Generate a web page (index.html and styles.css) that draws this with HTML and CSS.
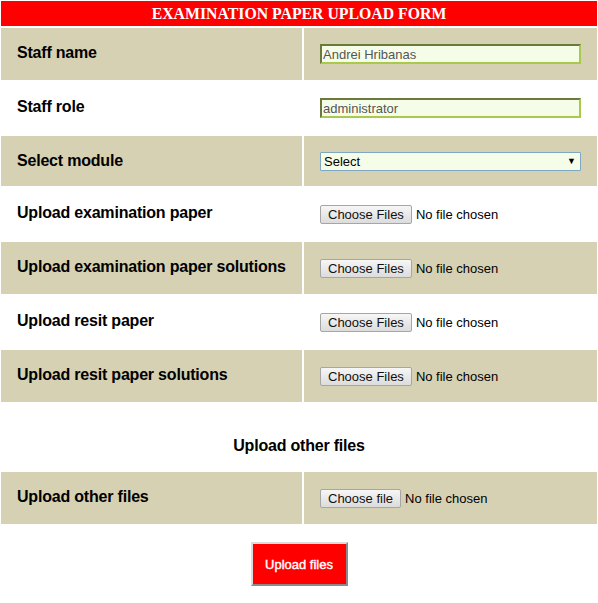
FILE: index.html
```html
<!DOCTYPE html>
<html>
<head>
<meta charset="utf-8">
<title>Examination paper upload form</title>
<link rel="stylesheet" href="styles.css">
</head>
<body>
<form class="form">
  <div class="title">EXAMINATION PAPER UPLOAD FORM</div>

  <div class="row tan">
    <div class="label">Staff name</div>
    <div class="field"><input class="text" type="text" value="Andrei Hribanas"></div>
  </div>
  <div class="row">
    <div class="label">Staff role</div>
    <div class="field"><input class="text" type="text" value="administrator"></div>
  </div>
  <div class="row tan short">
    <div class="label">Select module</div>
    <div class="field">
      <div class="select-wrap">
        <select class="select"><option>Select</option></select>
        <span class="arrow">▼</span>
      </div>
    </div>
  </div>
  <div class="row">
    <div class="label">Upload examination paper</div>
    <div class="field"><label class="file"><input type="file" multiple><span class="file-btn">Choose Files</span><span class="file-txt">No file chosen</span></label></div>
  </div>
  <div class="row tan">
    <div class="label">Upload examination paper solutions</div>
    <div class="field"><label class="file"><input type="file" multiple><span class="file-btn">Choose Files</span><span class="file-txt">No file chosen</span></label></div>
  </div>
  <div class="row">
    <div class="label">Upload resit paper</div>
    <div class="field"><label class="file"><input type="file" multiple><span class="file-btn">Choose Files</span><span class="file-txt">No file chosen</span></label></div>
  </div>
  <div class="row tan">
    <div class="label">Upload resit paper solutions</div>
    <div class="field"><label class="file"><input type="file" multiple><span class="file-btn">Choose Files</span><span class="file-txt">No file chosen</span></label></div>
  </div>

  <div class="section">Upload other files</div>

  <div class="row tan">
    <div class="label">Upload other files</div>
    <div class="field"><label class="file"><input type="file"><span class="file-btn">Choose file</span><span class="file-txt">No file chosen</span></label></div>
  </div>

  <div class="actions">
    <button type="submit" class="submit">Upload files</button>
  </div>
</form>
</body>
</html>
```

FILE: styles.css
```css
html, body {
  margin: 0;
  padding: 0;
  background: #ffffff;
}

body {
  font-family: "Liberation Sans", Arial, sans-serif;
  color: #000;
}

.form {
  display: flex;
  flex-direction: column;
  gap: 2px;
  padding: 1px;
}

.title {
  background: #ff0000;
  color: #ffffff;
  font-family: "Liberation Serif", "Times New Roman", serif;
  font-weight: bold;
  font-size: 15.8px;
  line-height: 25px;
  height: 25px;
  text-align: center;
}

.row {
  display: grid;
  grid-template-columns: 301px 1fr;
  column-gap: 2px;
  height: 52px;
}

.row.short {
  height: 50px;
}

.row > div {
  background: #ffffff;
}

.row.tan > div {
  background: #d6d1b2;
}

.label {
  font-size: 16px;
  font-weight: bold;
  line-height: 18px;
  letter-spacing: -0.2px;
  white-space: nowrap;
  padding: 16px 16px 0 16px;
}

.row.short .label {
  padding-top: 16px;
}

.field {
  padding: 0 16px;
  display: flex;
  align-items: center;
}

.text {
  box-sizing: border-box;
  width: 100%;
  height: 20px;
  margin: 0;
  padding: 0 1px;
  border: 2px solid;
  border-color: #6b7a3c #a9c94d #a9c94d #6b7a3c;
  background: #f5fde9;
  font-family: "Liberation Sans", Arial, sans-serif;
  font-size: 13px;
  color: #555555;
  outline: none;
}

.select-wrap {
  position: relative;
  width: 100%;
}

.select {
  box-sizing: border-box;
  width: 100%;
  height: 19px;
  margin: 0;
  padding: 0 3px;
  border: 1px solid #7ea7c4;
  border-radius: 1px;
  background: #f5fde9;
  font-family: "Liberation Sans", Arial, sans-serif;
  font-size: 13px;
  color: #000;
  appearance: none;
  -webkit-appearance: none;
  outline: none;
}

.arrow {
  position: absolute;
  right: 5px;
  top: 4px;
  font-size: 9px;
  line-height: 10px;
  pointer-events: none;
}

.file {
  display: flex;
  align-items: center;
  font-size: 13px;
  cursor: default;
}

.file input {
  display: none;
}

.file-btn {
  box-sizing: border-box;
  height: 19px;
  line-height: 17px;
  padding: 0 7px;
  border: 1px solid #a6a6a6;
  border-radius: 2px;
  background: linear-gradient(#f6f6f6, #dcdcdc);
  color: #111;
}

.file-txt {
  margin-left: 4px;
  color: #000;
}

.section {
  font-size: 16px;
  font-weight: bold;
  line-height: 18px;
  letter-spacing: -0.2px;
  text-align: center;
  padding: 33px 0 15px;
}

.actions {
  display: flex;
  justify-content: center;
  padding-top: 16px;
}

.submit {
  width: 97px;
  height: 44px;
  margin: 0;
  padding: 0;
  background: #ff0000;
  color: #ffffff;
  font-family: "Liberation Sans", Arial, sans-serif;
  font-size: 13px;
  font-weight: normal;
  -webkit-text-stroke: 0.4px #ffffff;
  border: 2px solid;
  border-color: #dcdcdc #8a8a8a #8a8a8a #dcdcdc;
}
```
